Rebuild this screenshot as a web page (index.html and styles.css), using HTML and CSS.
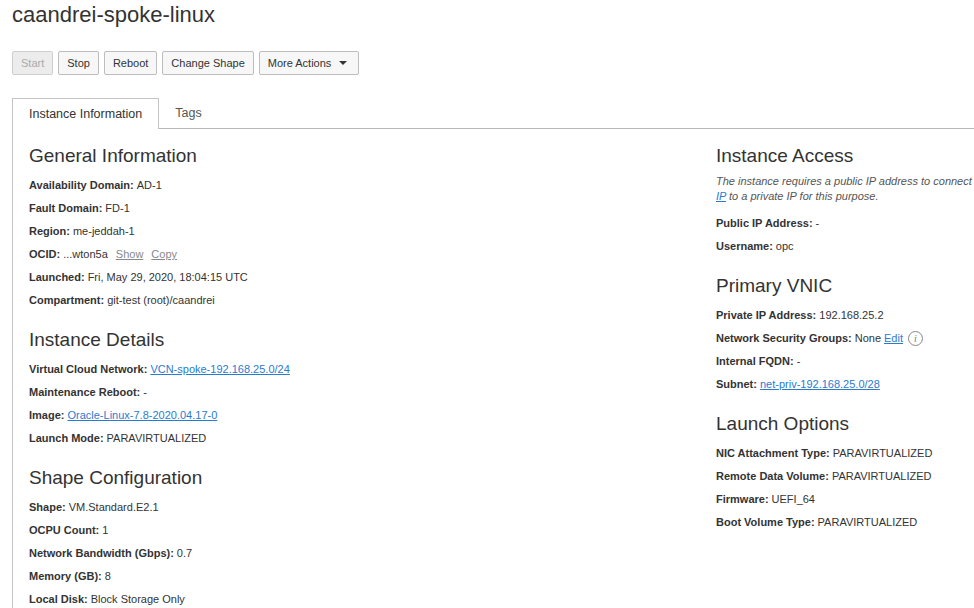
FILE: index.html
```html
<!DOCTYPE html>
<html lang="en">
<head>
<meta charset="utf-8">
<title>caandrei-spoke-linux</title>
<link rel="stylesheet" href="styles.css">
</head>
<body>
<div class="page">
  <h1 class="title">caandrei-spoke-linux</h1>
  <div class="toolbar">
    <button class="btn" disabled>Start</button>
    <button class="btn">Stop</button>
    <button class="btn">Reboot</button>
    <button class="btn">Change Shape</button>
    <button class="btn">More Actions <span class="caret"></span></button>
  </div>
  <div class="tabs">
    <div class="tab active">Instance Information</div>
    <div class="tab">Tags</div>
  </div>
  <div class="panel">
    <div class="col">
      <section class="section">
        <h2>General Information</h2>
        <div class="row"><b>Availability Domain:</b> AD-1</div>
        <div class="row"><b>Fault Domain:</b> FD-1</div>
        <div class="row"><b>Region:</b> me-jeddah-1</div>
        <div class="row"><b>OCID:</b> ...wton5a <a class="minor">Show</a> <a class="minor">Copy</a></div>
        <div class="row"><b>Launched:</b> Fri, May 29, 2020, 18:04:15 UTC</div>
        <div class="row"><b>Compartment:</b> git-test (root)/caandrei</div>
      </section>
      <section class="section">
        <h2>Instance Details</h2>
        <div class="row"><b>Virtual Cloud Network:</b> <a class="link">VCN-spoke-192.168.25.0/24</a></div>
        <div class="row"><b>Maintenance Reboot:</b> -</div>
        <div class="row"><b>Image:</b> <a class="link">Oracle-Linux-7.8-2020.04.17-0</a></div>
        <div class="row"><b>Launch Mode:</b> PARAVIRTUALIZED</div>
      </section>
      <section class="section">
        <h2>Shape Configuration</h2>
        <div class="row"><b>Shape:</b> VM.Standard.E2.1</div>
        <div class="row"><b>OCPU Count:</b> 1</div>
        <div class="row"><b>Network Bandwidth (Gbps):</b> 0.7</div>
        <div class="row"><b>Memory (GB):</b> 8</div>
        <div class="row"><b>Local Disk:</b> Block Storage Only</div>
      </section>
    </div>
    <div class="col">
      <section class="section">
        <h2>Instance Access</h2>
        <p class="note">The instance requires a public IP address to connect to it. You can assign a public<br><a class="link">IP</a> to a private IP for this purpose.</p>
        <div class="row"><b>Public IP Address:</b> -</div>
        <div class="row"><b>Username:</b> opc</div>
      </section>
      <section class="section">
        <h2>Primary VNIC</h2>
        <div class="row"><b>Private IP Address:</b> 192.168.25.2</div>
        <div class="row"><b>Network Security Groups:</b> None <a class="link">Edit</a><span class="info">i</span></div>
        <div class="row"><b>Internal FQDN:</b> -</div>
        <div class="row"><b>Subnet:</b> <a class="link">net-priv-192.168.25.0/28</a></div>
      </section>
      <section class="section">
        <h2>Launch Options</h2>
        <div class="row"><b>NIC Attachment Type:</b> PARAVIRTUALIZED</div>
        <div class="row"><b>Remote Data Volume:</b> PARAVIRTUALIZED</div>
        <div class="row"><b>Firmware:</b> UEFI_64</div>
        <div class="row"><b>Boot Volume Type:</b> PARAVIRTUALIZED</div>
      </section>
    </div>
  </div>
</div>
</body>
</html>
```
FILE: styles.css
```css
html, body {
  margin: 0;
  padding: 0;
  background: #fff;
  overflow: hidden;
}
body {
  font-family: "Liberation Sans", Arial, sans-serif;
  color: #333;
  font-size: 11px;
}
.page {
  padding-left: 12px;
  width: 1200px;
}
.title {
  margin: 0;
  padding-top: 2px;
  font-size: 22px;
  line-height: 26px;
  font-weight: normal;
  color: #333;
}
.toolbar {
  display: flex;
  gap: 5px;
  margin-top: 23px;
}
.btn {
  font-family: inherit;
  font-size: 11px;
  color: #333;
  height: 24px;
  padding: 0 8px;
  background: #f7f7f7;
  border: 1px solid #bdbdbd;
  border-radius: 2px;
  display: flex;
  align-items: center;
  gap: 8px;
}
.btn:disabled {
  background: #ececec;
  color: #aaa;
  border-color: #cfcfcf;
}
.caret {
  width: 0;
  height: 0;
  border-left: 4px solid transparent;
  border-right: 4px solid transparent;
  border-top: 4px solid #333;
  margin-right: 3px;
}
.tabs {
  display: flex;
  margin-top: 23px;
  border-bottom: 1px solid #b8b8b8;
  width: 962px;
}
.tab {
  font-size: 12.5px;
  line-height: 30px;
  padding: 0 16px;
  color: #555;
}
.tab.active {
  border: 1px solid #c4c4c4;
  border-bottom: none;
  background: #fff;
  margin-bottom: -1px;
  color: #333;
}
.panel {
  border-left: 1px solid #c4c4c4;
  padding: 15px 0 40px 16px;
  display: grid;
  grid-template-columns: 687px 1fr;
}
.section + .section {
  margin-top: 16px;
}
h2 {
  margin: 0 0 6px;
  font-size: 19px;
  line-height: 24px;
  font-weight: normal;
  color: #333;
}
.row {
  line-height: 23px;
  white-space: nowrap;
  display: flex;
  align-items: center;
  gap: 3px;
}
.row b {
  font-weight: bold;
}
.link {
  color: #2a7bcf;
  text-decoration: underline;
}
.minor {
  color: #888;
  font-size: 11px;
  text-decoration: underline;
  margin-left: 5px;
}
.note {
  margin: 2px 0 8px;
  font-size: 11px;
  line-height: 15px;
  font-style: italic;
  color: #555;
  white-space: nowrap;
}
.info {
  width: 13px;
  height: 13px;
  border: 1px solid #888;
  border-radius: 50%;
  font-family: "Liberation Serif", serif;
  font-style: italic;
  font-size: 10px;
  line-height: 13px;
  text-align: center;
  color: #777;
  margin-left: 2px;
}
```
